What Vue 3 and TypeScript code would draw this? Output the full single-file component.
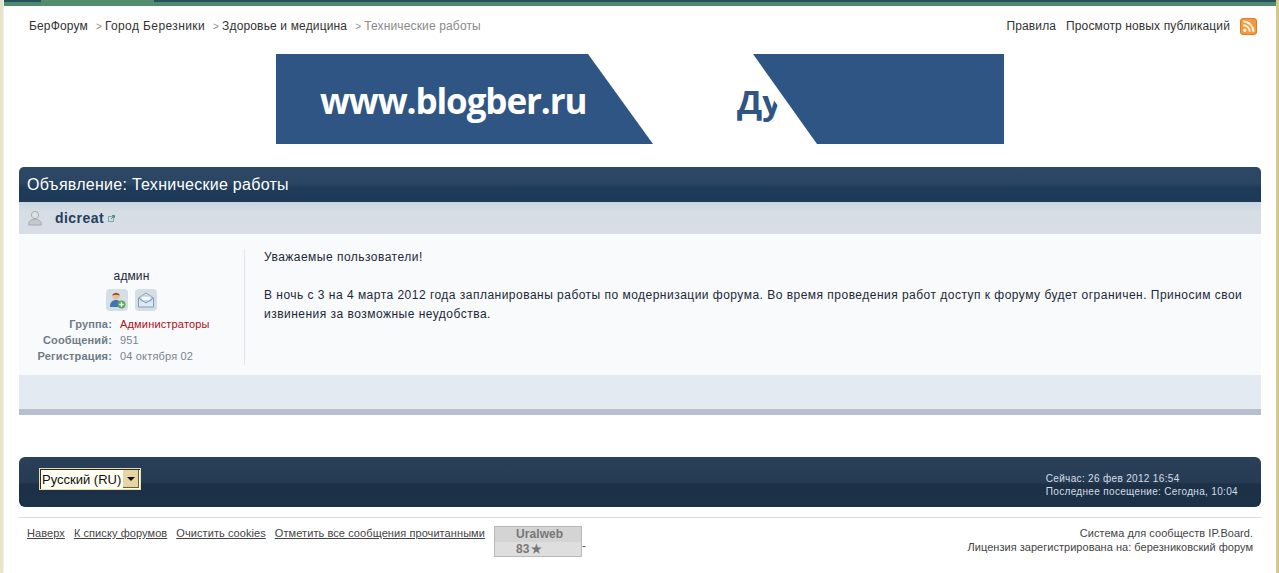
<script setup lang="ts">
const footLinks = ['Наверх', 'К списку форумов', 'Очистить cookies', 'Отметить все сообщения прочитанными']
const stats = [
  { label: 'Группа:', value: 'Администраторы', red: true },
  { label: 'Сообщений:', value: '951', red: false },
  { label: 'Регистрация:', value: '04 октября 02', red: false },
]
</script>

<template>
  <div class="page">
    <div class="topbar"><span class="topbar-tab"></span></div>

    <div class="nav">
      <div class="crumbs">
        <a>БерФорум</a>
        <span class="sep">&gt;</span><a class="wide">Город Березники</a>
        <span class="sep">&gt;</span><a>Здоровье и медицина</a>
        <span class="sep">&gt;</span><span class="current">Технические работы</span>
      </div>
      <div class="nav-right">
        <a>Правила</a>
        <a>Просмотр новых публикаций</a>
        <svg class="rss" width="17" height="17" viewBox="0 0 17 17">
          <rect x="0.5" y="0.5" width="16" height="16" rx="2.5" fill="#f39a3e" stroke="#d9812c" />
          <circle cx="4.8" cy="12.2" r="1.7" fill="#fff3df" />
          <path d="M3.2 7.2a6.6 6.6 0 0 1 6.6 6.6M3.2 3.6a10.2 10.2 0 0 1 10.2 10.2" fill="none" stroke="#fff3df" stroke-width="2" />
        </svg>
      </div>
    </div>

    <div class="banner">
      <svg width="728" height="90" viewBox="0 0 728 90">
        <polygon points="0,0 312,0 377,90 0,90" fill="#2e5583" />
        <text x="44" y="60" class="banner-url">www.blogber.ru</text>
        <text x="461" y="60" class="banner-du">Ду</text>
        <polygon points="465,0 477,0 541,90 529,90" fill="#fff" />
        <polygon points="477,0 728,0 728,90 541,90" fill="#2e5583" />
      </svg>
    </div>

    <div class="titlebar">Объявление: Технические работы</div>

    <div class="author">
      <svg class="avatar" width="16" height="16" viewBox="0 0 16 16">
        <circle cx="8" cy="5" r="3.6" fill="#dfe2e5" stroke="#a4abb2" />
        <path d="M1.5 15c0-4 2.500-5.600 6.500-5.600s6.500 1.600 6.500 5.600z" fill="#c4c9ce" stroke="#a4abb2" />
      </svg>
      <a class="author-name">dicreat</a>
      <svg class="ext" width="7" height="7" viewBox="0 0 7 7">
        <rect x="0.5" y="1.500" width="5" height="5" fill="none" stroke="#7fa89f" />
        <path d="M3 4 6.500 0.500M4 0.500h2.500V3" fill="none" stroke="#4f8f80" />
      </svg>
    </div>

    <div class="post">
      <div class="side">
        <div class="role">админ</div>
        <div class="side-icons">
          <span class="icon-btn">
            <svg width="18" height="18" viewBox="0 0 18 18">
              <circle cx="8" cy="5" r="3.500" fill="#eebd93" />
              <path d="M4.300 4.500C4.500 1.500 11 1 11.700 4.500 9 3.500 7 3.500 4.300 4.500z" fill="#8a4a22" />
              <path d="M2 16c0-5 2.500-7 6-7s6 2 6 7z" fill="#3f74b5" />
              <circle cx="13.500" cy="13.500" r="4" fill="#58a85a" />
              <path d="M13.500 11.300v4.400M11.300 13.500h4.400" stroke="#fff" stroke-width="1.400" />
            </svg>
          </span>
          <span class="icon-btn">
            <svg width="18" height="18" viewBox="0 0 18 18">
              <path d="M1.500 7 9 2l7.500 5v9h-15z" fill="#dfe9f3" stroke="#7d9dbd" />
              <rect x="4" y="5" width="10" height="5" fill="#f6f9fc" stroke="#a9bfd4" />
              <path d="M1.500 7 9 12l7.500-5" fill="none" stroke="#7d9dbd" />
            </svg>
          </span>
        </div>
        <div v-for="s in stats" :key="s.label" class="stat">
          <span class="stat-label">{{ s.label }}</span>
          <span class="stat-value" :class="{ red: s.red }">{{ s.value }}</span>
        </div>
      </div>
      <div class="body">
        <p>Уважаемые пользователи!</p>
        <p>В ночь с 3 на 4 марта 2012 года запланированы работы по модернизации форума. Во время проведения работ доступ к форуму будет ограничен. Приносим свои извинения за возможные неудобства.</p>
      </div>
    </div>

    <div class="post-foot"></div>

    <div class="darkbar">
      <div class="lang">
        <span class="lang-text">Русский (RU)</span>
        <span class="lang-arrow"></span>
      </div>
      <div class="times">
        <div>Сейчас: 26 фев 2012 16:54</div>
        <div>Последнее посещение: Сегодна, 10:04</div>
      </div>
    </div>

    <div class="footer">
      <div class="foot-left">
        <a v-for="l in footLinks" :key="l">{{ l }}</a>
        <div class="counter">
          <div class="counter-top">Uralweb</div>
          <div class="counter-bottom">83<span class="star">★</span></div>
          <span class="dash">-</span>
        </div>
      </div>
      <div class="copy">
        <div>Система для сообществ IP.Board.</div>
        <div>Лицензия зарегистрирована на: березниковский форум</div>
      </div>
    </div>
  </div>
</template>

<style>
html, body {
  margin: 0;
  background: #fff;
}
</style>

<style scoped>
.page {
  height: 573px;
  box-sizing: border-box;
  padding: 0 18px 0 19px;
  overflow: hidden;
  font-family: "Liberation Sans", Arial, sans-serif;
  font-size: 12px;
  color: #1c2837;
  background: linear-gradient(90deg, #e6e4cc 0, #e6e4cc 3px, #fff 4px, #fff 1276px, #d5c98a 1276px);
}

.topbar {
  height: 4px;
  margin: 0 -15px 0 -15px;
  background: #4f8a6c;
  border-top: 2px solid #27505e;
}

.topbar-tab {
  display: block;
  width: 113px;
  height: 6px;
  margin: -2px 0 0 37px;
  background: #528e6e;
}

.nav {
  display: flex;
  justify-content: space-between;
  align-items: center;
  height: 40px;
  padding: 0 4px 0 10px;
  letter-spacing: 0.15px;
}

.crumbs {
  display: flex;
  align-items: center;
  color: #333;
}

.wide {
  letter-spacing: 0.4px;
}

.sep {
  color: #8b8b8b;
  font-size: 10px;
  margin: 0 3px 0 8px;
}

.current {
  color: #8a8a8a;
}

.nav-right {
  display: flex;
  align-items: center;
  color: #333;
  gap: 10px;
  letter-spacing: 0.12px;
}

.banner {
  display: flex;
  justify-content: center;
  margin-top: 8px;
  height: 90px;
}

.banner-url {
  font-family: "Open Sans", sans-serif;
  font-weight: 700;
  font-size: 35px;
  fill: #fff;
  letter-spacing: -1.1px;
}

.banner-du {
  font-family: "Open Sans", sans-serif;
  font-weight: 700;
  font-size: 33px;
  fill: #2e5583;
}

.titlebar {
  margin-top: 23px;
  height: 35px;
  line-height: 36px;
  padding-left: 8px;
  color: #fff;
  font-size: 16px;
  letter-spacing: 0.27px;
  border-radius: 5px 5px 0 0;
  background: linear-gradient(180deg, #2d4766 0, #2b4663 45%, #1e3b59 60%, #1c3a58 100%);
}

.author {
  display: flex;
  align-items: center;
  height: 32px;
  background: linear-gradient(180deg, #c9d6e0 0, #d6dde4 30%, #d8dee5 100%);
  padding-left: 8px;
}

.avatar {
  margin-right: 12px;
}

.author-name {
  font-size: 14px;
  font-weight: 700;
  color: #24405e;
  letter-spacing: 0.45px;
}

.ext {
  margin-left: 4px;
}

.post {
  display: flex;
  height: 141px;
  box-sizing: border-box;
  background: #f8fafc;
  padding-top: 14px;
}

.side {
  width: 226px;
  height: 116px;
  margin-top: 1px;
  box-sizing: border-box;
  border-right: 1px solid #e2e7ec;
  padding-top: 20px;
}

.role {
  text-align: center;
  letter-spacing: 0.1px;
  line-height: 14px;
}

.side-icons {
  display: flex;
  justify-content: center;
  gap: 7px;
  margin: 6px 0 5px;
}

.icon-btn {
  width: 22px;
  height: 22px;
  border-radius: 4px;
  background: #d5dde5;
  display: flex;
  align-items: center;
  justify-content: center;
}

.stat {
  display: flex;
  font-size: 11px;
  line-height: 16px;
  gap: 8px;
  letter-spacing: 0.17px;
}

.stat-label {
  width: 93px;
  text-align: right;
  font-weight: 700;
  color: #707b88;
}

.stat-value {
  color: #7a8490;
}

.stat-value.red {
  color: #ad0f20;
}

.body {
  flex: 1;
  padding: 0 15px 0 19px;
  line-height: 19px;
  letter-spacing: 0.48px;
}

.body p {
  margin: 0 0 19px;
}

.post-foot {
  height: 34px;
  background: #e4eaf2;
  border-bottom: 6px solid #b5bfcf;
}

.darkbar {
  display: flex;
  justify-content: space-between;
  align-items: flex-start;
  margin-top: 42px;
  height: 50px;
  box-sizing: border-box;
  border-radius: 6px;
  padding: 11px 23px 0 20px;
  background: linear-gradient(180deg, #2a3f58 0, #263c54 50%, #1c3046 55%, #1b3248 100%);
}

.lang {
  display: flex;
  align-items: center;
  width: 102px;
  height: 22px;
  box-sizing: border-box;
  border: 1px solid #e8e0ac;
  background: #fffef2;
  color: #111;
  font-size: 13px;
  padding-left: 2px;
  box-shadow: inset 1px 1px 0 #2a2a1e;
}

.lang-text {
  flex: 1;
  white-space: nowrap;
}

.lang-arrow {
  width: 16px;
  height: 18px;
  margin-right: 1px;
  background: #e6d5a3;
  box-shadow: inset -1px -1px 0 #6b5f3a;
  position: relative;
}

.lang-arrow::after {
  content: "";
  position: absolute;
  left: 4px;
  top: 7px;
  border: 4px solid transparent;
  border-top: 4px solid #111;
  border-bottom: 0;
}

.times {
  margin-top: 4px;
  color: #d5dde5;
  font-size: 10px;
  letter-spacing: 0.33px;
  line-height: 13px;
}

.footer {
  display: flex;
  justify-content: space-between;
  margin-top: 10px;
  border-top: 1px solid #d5dde5;
  padding: 7px 8px 0 8px;
  color: #444;
  font-size: 11px;
}

.foot-left {
  display: flex;
  align-items: flex-start;
  gap: 9px;
  letter-spacing: 0.08px;
}

.foot-left a {
  text-decoration: underline;
  color: #444;
  line-height: 16px;
}

.counter {
  position: relative;
  width: 88px;
  height: 31px;
  margin-top: 1px;
  box-sizing: border-box;
  border: 1px solid #b9b9b9;
  background: #dedede;
  color: #777;
  font-weight: 700;
  font-size: 12px;
  line-height: 15px;
}

.counter-top {
  background: #d4d4d4;
  padding-left: 21px;
}

.counter-bottom {
  padding-left: 21px;
}

.star {
  margin-left: 1px;
}

.dash {
  position: absolute;
  left: 87px;
  top: 12px;
  color: #555;
  font-weight: 400;
}

.copy {
  margin-top: 1px;
  text-align: right;
  line-height: 14px;
  letter-spacing: 0.03px;
}
</style>
